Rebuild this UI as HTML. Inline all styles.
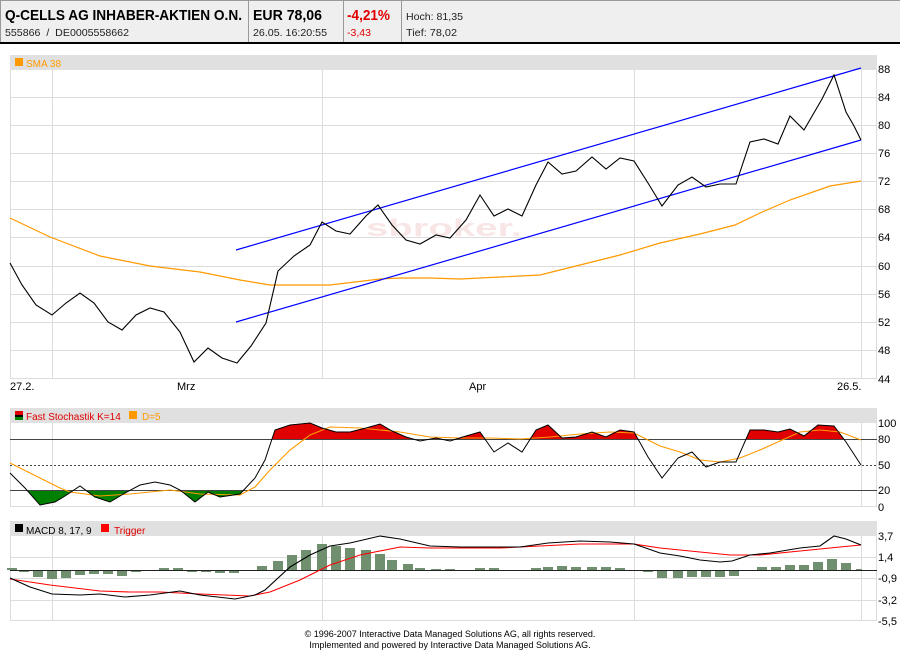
<!DOCTYPE html>
<html><head><meta charset="utf-8"><style>
html,body{margin:0;padding:0;background:#fff;width:900px;height:650px;overflow:hidden}
svg{display:block}
text{font-family:"Liberation Sans",Arial,sans-serif}
</style></head><body>
<svg width="900" height="650" viewBox="0 0 900 650" xmlns="http://www.w3.org/2000/svg">
<!-- header -->
<rect x="0" y="0" width="900" height="43" fill="#efefef"/>
<line x1="0" y1="0.5" x2="900" y2="0.5" stroke="#999"/>
<line x1="0.5" y1="0" x2="0.5" y2="43" stroke="#999"/>
<line x1="0" y1="43" x2="900" y2="43" stroke="#000" stroke-width="2"/>
<line x1="248.5" y1="0" x2="248.5" y2="42" stroke="#999"/>
<line x1="343.5" y1="0" x2="343.5" y2="42" stroke="#999"/>
<line x1="401.5" y1="0" x2="401.5" y2="42" stroke="#999"/>
<text x="5" y="20" font-size="15" font-weight="bold" textLength="237" lengthAdjust="spacingAndGlyphs">Q-CELLS AG INHABER-AKTIEN O.N.</text>
<text x="5" y="36" font-size="10.5" fill="#222" textLength="124" lengthAdjust="spacingAndGlyphs" xml:space="preserve">555866  /  DE0005558662</text>
<text x="253" y="20" font-size="15" font-weight="bold" textLength="69" lengthAdjust="spacingAndGlyphs">EUR 78,06</text>
<text x="253" y="36" font-size="10.5" fill="#222" textLength="74" lengthAdjust="spacingAndGlyphs">26.05. 16:20:55</text>
<text x="347" y="20" font-size="15" font-weight="bold" fill="#e00000" textLength="43" lengthAdjust="spacingAndGlyphs">-4,21%</text>
<text x="347" y="36" font-size="10.5" fill="#e00000">-3,43</text>
<text x="406" y="20" font-size="10.5" fill="#222" textLength="57" lengthAdjust="spacingAndGlyphs">Hoch: 81,35</text>
<text x="406" y="36" font-size="10.5" fill="#222" textLength="51" lengthAdjust="spacingAndGlyphs">Tief: 78,02</text>

<!-- main chart -->
<rect x="10" y="55" width="867" height="15" fill="#e0e0e0"/>
<rect x="15" y="58" width="8" height="8" fill="#f90"/>
<text x="26" y="67" font-size="10" fill="#f90">SMA 38</text>
<g stroke="#dcdcdc" stroke-width="1">
<line x1="10.5" y1="70" x2="10.5" y2="379"/>
<line x1="876.5" y1="70" x2="876.5" y2="379"/>
<line x1="52.5" y1="70" x2="52.5" y2="379"/>
<line x1="322.5" y1="70" x2="322.5" y2="379"/>
<line x1="634.5" y1="70" x2="634.5" y2="379"/>
<line x1="861.5" y1="70" x2="861.5" y2="379"/>
<line x1="10" y1="97.5" x2="877" y2="97.5"/><line x1="10" y1="125.5" x2="877" y2="125.5"/>
<line x1="10" y1="153.5" x2="877" y2="153.5"/><line x1="10" y1="181.5" x2="877" y2="181.5"/>
<line x1="10" y1="209.5" x2="877" y2="209.5"/><line x1="10" y1="237.5" x2="877" y2="237.5"/>
<line x1="10" y1="266.5" x2="877" y2="266.5"/><line x1="10" y1="294.5" x2="877" y2="294.5"/>
<line x1="10" y1="322.5" x2="877" y2="322.5"/><line x1="10" y1="350.5" x2="877" y2="350.5"/>
<line x1="10" y1="378.5" x2="877" y2="378.5"/>
</g>
<text x="366" y="236" font-size="24" font-weight="bold" fill="#f8e6e6" textLength="156" lengthAdjust="spacingAndGlyphs">sbroker.</text>
<g font-size="11" fill="#000">
<text x="878" y="73">88</text><text x="878" y="101">84</text><text x="878" y="129">80</text>
<text x="878" y="157">76</text><text x="878" y="185">72</text><text x="878" y="213">68</text>
<text x="878" y="241">64</text><text x="878" y="270">60</text><text x="878" y="298">56</text>
<text x="878" y="326">52</text><text x="878" y="354">48</text><text x="878" y="383">44</text>
<text x="10" y="390">27.2.</text><text x="177" y="390">Mrz</text><text x="469" y="390">Apr</text><text x="837" y="390">26.5.</text>
</g>
<polyline fill="none" stroke="#f90" stroke-width="1.2" points="10,218 50,237 100,256 150,266 200,272 240,280 270,285 290,285 330,285 380,279 400,278 430,278 460,279 500,277 540,275 580,265 620,255 660,243 700,234 735,225 760,213 790,200 830,186 861,181"/>
<line x1="236" y1="250" x2="861" y2="68" stroke="#00f" stroke-width="1.2"/>
<line x1="236" y1="322" x2="861" y2="140" stroke="#00f" stroke-width="1.2"/>
<polyline fill="none" stroke="#000" stroke-width="1.1" points="10,263 22,285 36,305 52,315 66,303 80,293 94,303 108,322 122,330 136,315 150,308 164,312 180,332 194,362 208,348 222,358 237,363 251,346 266,323 278,271 294,256 310,245 322,222 336,231 350,234 366,216 378,205 392,225 406,240 420,244 436,235 450,238 466,220 480,195 494,216 508,209 522,216 536,185 548,162 562,174 576,171 592,157 606,169 620,158 634,161 648,183 662,206 678,185 692,177 706,187 720,184 736,184 750,142 764,139 778,144 790,116 804,130 822,99 834,75 846,112 854,126 861,140"/>

<!-- stochastic -->
<rect x="10" y="408" width="867" height="15" fill="#e0e0e0"/>
<rect x="15" y="411" width="8" height="4" fill="#e00000"/><rect x="15" y="415" width="8" height="2" fill="#000"/><rect x="15" y="417" width="8" height="3" fill="#080"/>
<text x="26" y="420" font-size="10" fill="#e00000">Fast Stochastik K=14</text>
<rect x="129" y="411" width="8" height="8" fill="#f90"/>
<text x="142" y="420" font-size="10" fill="#f90">D=5</text>
<g stroke="#dcdcdc">
<line x1="10.5" y1="423" x2="10.5" y2="507"/><line x1="52.5" y1="423" x2="52.5" y2="507"/>
<line x1="322.5" y1="423" x2="322.5" y2="507"/><line x1="634.5" y1="423" x2="634.5" y2="507"/>
<line x1="861.5" y1="423" x2="861.5" y2="507"/><line x1="876.5" y1="423" x2="876.5" y2="507"/>
<line x1="10" y1="506.5" x2="877" y2="506.5"/>
</g>
<defs>
<clipPath id="top"><rect x="10" y="400" width="867" height="39"/></clipPath>
<clipPath id="bot"><rect x="10" y="490" width="867" height="20"/></clipPath>
</defs>
<polygon clip-path="url(#top)" fill="#e00000" points="10,439 10,473 25,488 40,505 55,502 65,496 80,486 95,497 110,502 125,493 140,485 155,482 170,485 180,490 195,502 208,492 220,497 240,494 255,478 265,460 275,430 290,425 310,423 322,428 336,432 350,432 366,428 380,424 392,431 406,437 420,441 436,438 450,441 466,436 480,432 494,452 508,443 522,452 536,430 548,425 562,438 576,437 592,432 606,437 620,430 634,432 648,457 662,478 678,458 692,452 706,467 720,462 736,462 750,430 764,430 778,432 790,429 804,436 818,425 834,426 846,442 861,465 861,439"/>
<polygon clip-path="url(#bot)" fill="#008000" points="10,490 10,473 25,488 40,505 55,502 65,496 80,486 95,497 110,502 125,493 140,485 155,482 170,485 180,490 195,502 208,492 220,497 240,494 255,478 265,460 265,490"/>
<line x1="10" y1="439.5" x2="877" y2="439.5" stroke="#444"/>
<line x1="10" y1="465.5" x2="877" y2="465.5" stroke="#444" stroke-dasharray="2,2"/>
<line x1="10" y1="490.5" x2="877" y2="490.5" stroke="#444"/>
<polyline fill="none" stroke="#f90" stroke-width="1.1" points="10,463 30,473 50,483 60,488 70,492 100,496 130,494 170,490 200,494 240,495 255,487 270,470 290,450 310,435 330,427 360,428 380,430 400,432 430,437 460,438 490,438 520,439 550,437 580,434 610,432 634,433 660,446 680,452 700,460 720,462 740,458 760,450 780,441 800,432 820,430 840,432 861,440"/>
<polyline fill="none" stroke="#000" stroke-width="1" points="10,473 25,488 40,505 55,502 65,496 80,486 95,497 110,502 125,493 140,485 155,482 170,485 180,490 195,502 208,492 220,497 240,494 255,478 265,460 275,430 290,425 310,423 322,428 336,432 350,432 366,428 380,424 392,431 406,437 420,441 436,438 450,441 466,436 480,432 494,452 508,443 522,452 536,430 548,425 562,438 576,437 592,432 606,437 620,430 634,432 648,457 662,478 678,458 692,452 706,467 720,462 736,462 750,430 764,430 778,432 790,429 804,436 818,425 834,426 846,442 861,465"/>
<g font-size="11">
<text x="878" y="427">100</text><text x="878" y="443">80</text><text x="878" y="469">50</text>
<text x="878" y="494">20</text><text x="878" y="511">0</text>
</g>

<!-- MACD -->
<rect x="10" y="521" width="867" height="15" fill="#e0e0e0"/>
<rect x="15" y="524" width="8" height="8" fill="#000"/>
<text x="26" y="534" font-size="10">MACD 8, 17, 9</text>
<rect x="101" y="524" width="8" height="8" fill="#f00"/>
<text x="114" y="534" font-size="10" fill="#e00000">Trigger</text>
<g stroke="#dcdcdc">
<line x1="10.5" y1="536" x2="10.5" y2="621"/><line x1="52.5" y1="536" x2="52.5" y2="621"/>
<line x1="322.5" y1="536" x2="322.5" y2="621"/><line x1="634.5" y1="536" x2="634.5" y2="621"/>
<line x1="861.5" y1="536" x2="861.5" y2="621"/><line x1="876.5" y1="536" x2="876.5" y2="621"/>
<line x1="10" y1="557.5" x2="877" y2="557.5"/><line x1="10" y1="578.5" x2="877" y2="578.5"/>
<line x1="10" y1="600.5" x2="877" y2="600.5"/><line x1="10" y1="620.5" x2="877" y2="620.5"/>
</g>
<g fill="#6f8f6f">
<rect x="7" y="568" width="10" height="2"/>
<rect x="19" y="570" width="10" height="2"/><rect x="33" y="570" width="10" height="7"/>
<rect x="47" y="570" width="10" height="9"/><rect x="61" y="570" width="10" height="8"/>
<rect x="75" y="570" width="10" height="5"/><rect x="89" y="570" width="10" height="4"/>
<rect x="103" y="570" width="10" height="4"/><rect x="117" y="570" width="10" height="6"/>
<rect x="131" y="570" width="10" height="2"/><rect x="159" y="568" width="10" height="2"/>
<rect x="173" y="568" width="10" height="2"/><rect x="187" y="570" width="10" height="2"/>
<rect x="201" y="570" width="10" height="2"/><rect x="215" y="570" width="10" height="3"/>
<rect x="229" y="570" width="10" height="3"/>
<rect x="257" y="566" width="10" height="4"/><rect x="273" y="561" width="10" height="9"/>
<rect x="287" y="555" width="10" height="15"/><rect x="301" y="550" width="10" height="20"/>
<rect x="317" y="544" width="10" height="26"/><rect x="331" y="546" width="10" height="24"/>
<rect x="345" y="548" width="10" height="22"/><rect x="361" y="550" width="10" height="20"/>
<rect x="375" y="554" width="10" height="16"/><rect x="387" y="560" width="10" height="10"/>
<rect x="403" y="564" width="10" height="6"/><rect x="415" y="568" width="10" height="2"/>
<rect x="431" y="569" width="10" height="1"/><rect x="445" y="569" width="10" height="1"/>
<rect x="475" y="568" width="10" height="2"/><rect x="489" y="568" width="10" height="2"/>
<rect x="531" y="568" width="10" height="2"/><rect x="543" y="567" width="10" height="3"/>
<rect x="557" y="566" width="10" height="4"/><rect x="571" y="567" width="10" height="3"/>
<rect x="587" y="567" width="10" height="3"/><rect x="601" y="567" width="10" height="3"/>
<rect x="615" y="568" width="10" height="2"/><rect x="643" y="570" width="10" height="2"/>
<rect x="657" y="570" width="10" height="8"/><rect x="673" y="570" width="10" height="8"/>
<rect x="687" y="570" width="10" height="7"/><rect x="701" y="570" width="10" height="7"/>
<rect x="715" y="570" width="10" height="7"/><rect x="729" y="570" width="10" height="6"/>
<rect x="757" y="567" width="10" height="3"/><rect x="771" y="567" width="10" height="3"/>
<rect x="785" y="565" width="10" height="5"/><rect x="799" y="565" width="10" height="5"/>
<rect x="813" y="562" width="10" height="8"/><rect x="827" y="559" width="10" height="11"/>
<rect x="841" y="563" width="10" height="7"/><rect x="856" y="569" width="6" height="1"/>
</g>
<line x1="10" y1="570.5" x2="877" y2="570.5" stroke="#222"/>
<polyline fill="none" stroke="#f00" stroke-width="1.1" points="10,579 50,585 100,591 130,592 160,592 200,594 250,596 270,592 300,580 330,565 360,555 400,547 430,548 460,548 500,548 540,546 580,544 634,544 660,548 690,551 730,555 760,555 800,551 840,547 861,545"/>
<polyline fill="none" stroke="#000" stroke-width="1.1" points="10,578 30,587 52,594 80,595 100,594 125,597 150,595 180,591 200,595 235,599 255,595 265,590 290,567 310,555 330,546 350,543 380,536 400,539 430,546 460,547 490,547 520,547 548,543 580,541 610,542 634,544 660,553 680,556 700,560 720,562 732,561 750,555 770,553 800,548 820,546 834,536 846,539 861,545"/>
<g font-size="11">
<text x="878" y="540">3,7</text><text x="878" y="561">1,4</text><text x="878" y="582">-0,9</text>
<text x="878" y="604">-3,2</text><text x="878" y="625">-5,5</text>
</g>

<!-- footer -->
<g font-size="9" text-anchor="middle" fill="#000">
<text x="450" y="637">© 1996-2007 Interactive Data Managed Solutions AG, all rights reserved.</text>
<text x="450" y="648">Implemented and powered by Interactive Data Managed Solutions AG.</text>
</g>
</svg>
</body></html>
